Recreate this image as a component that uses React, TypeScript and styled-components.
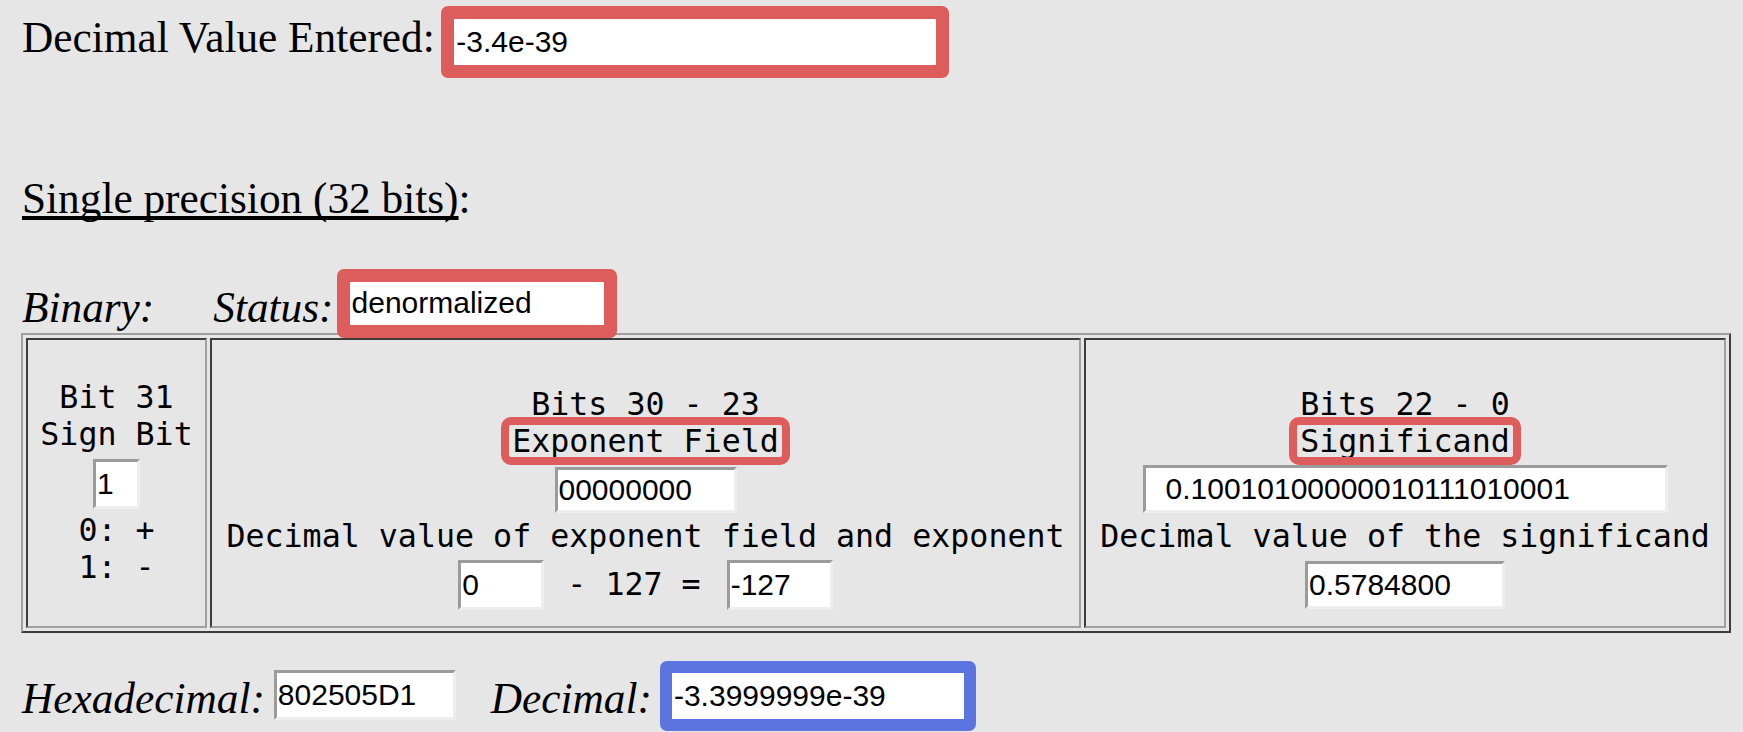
import React from "react";
import styled, { createGlobalStyle } from "styled-components";

const RED = "#dd5c5c";
const BLUE = "#5c74e0";
const LIGHT_EDGE = "#a0a0a0";
const DARK_EDGE = "#3c3c3c";

const GlobalStyle = createGlobalStyle`
  html, body {
    margin: 0;
    padding: 0;
    background: #e6e6e6;
  }
  body {
    width: 1743px;
    height: 732px;
    overflow: hidden;
  }
`;

const Page = styled.div`
  box-sizing: border-box;
  width: 1743px;
  height: 732px;
  padding: 6px 0 0 21px;
  background: #e6e6e6;
  color: #000;
  font-family: "Liberation Serif", "Times New Roman", serif;
  display: flex;
  flex-direction: column;
  align-items: flex-start;
`;

const Row = styled.div<{ $mt?: number }>`
  display: flex;
  align-items: flex-start;
  padding-left: 1px;
  margin-top: ${(p) => p.$mt ?? 0}px;
`;

const Label = styled.span<{ $italic?: boolean; $mt?: number; $mr?: number; $ml?: number }>`
  font-size: 43.3px;
  line-height: 50px;
  font-style: ${(p) => (p.$italic ? "italic" : "normal")};
  margin-top: ${(p) => p.$mt ?? 0}px;
  margin-right: ${(p) => p.$mr ?? 0}px;
  margin-left: ${(p) => p.$ml ?? 0}px;
  white-space: pre;
`;

const Heading = styled.div`
  font-size: 43.3px;
  line-height: 50px;
  margin-top: 95.4px;
  padding-left: 1px;
  white-space: pre;
`;

const Underlined = styled.span`
  text-decoration: underline;
  text-decoration-skip-ink: none;
`;

const Highlight = styled.div<{ $color: string; $bw: number; $mt?: number; $mb?: number }>`
  position: relative;
  z-index: 1;
  display: flex;
  border: ${(p) => p.$bw}px solid ${(p) => p.$color};
  border-radius: 7px;
  margin-top: ${(p) => p.$mt ?? 0}px;
  margin-bottom: ${(p) => p.$mb ?? 0}px;
`;

const Field = styled.input<{ $w: number; $h: number; $pl?: number; $mt?: number; $bare?: boolean }>`
  box-sizing: border-box;
  display: block;
  width: ${(p) => p.$w}px;
  height: ${(p) => p.$h}px;
  margin: ${(p) => p.$mt ?? 0}px 0 0 0;
  padding: 0 0 0 ${(p) => p.$pl ?? 1}px;
  font-family: "Liberation Sans", Arial, sans-serif;
  font-size: 30px;
  color: #000;
  background: #fff;
  border-style: solid;
  border-width: ${(p) => (p.$bare ? 0 : 3)}px;
  border-color: #9b9b9b #eeeeee #eeeeee #9b9b9b;
  border-radius: 0;
  outline: none;
`;

const BitTable = styled.div`
  display: grid;
  grid-template-columns: 181px 871px 642px;
  column-gap: 3px;
  padding: 3px;
  border: 2px solid;
  border-color: ${LIGHT_EDGE} ${DARK_EDGE} ${DARK_EDGE} ${LIGHT_EDGE};
  font-family: "DejaVu Sans Mono", "Liberation Mono", monospace;
  font-size: 31.65px;
  color: #000;
`;

const Cell = styled.div<{ $center?: boolean }>`
  box-sizing: border-box;
  border: 2px solid;
  border-color: ${DARK_EDGE} ${LIGHT_EDGE} ${LIGHT_EDGE} ${DARK_EDGE};
  display: flex;
  flex-direction: column;
  align-items: center;
  justify-content: ${(p) => (p.$center ? "center" : "flex-start")};
  padding: ${(p) => (p.$center ? "0" : "45.6px 0 16px")};
`;

const MonoLine = styled.div<{ $mt?: number }>`
  line-height: 37px;
  white-space: pre;
  margin-top: ${(p) => p.$mt ?? 0}px;
`;

const Tag = styled.span`
  padding: 0 5px;
  outline: 8px solid ${RED};
  outline-offset: -2px;
  border-radius: 4px;
`;

const ExpRow = styled.div`
  display: flex;
  align-items: center;
  margin-top: 5.4px;
`;

const Operator = styled.span`
  line-height: 37px;
  white-space: pre;
  margin: 0 26px 0 23px;
`;

export default function App() {
  return (
    <>
      <GlobalStyle />
      <Page>
        <Row>
          <Label $mt={6.4} $mr={6.5}>Decimal Value Entered:</Label>
          <Highlight $color={RED} $bw={13}>
            <Field $bare $w={482} $h={46} $pl={2} readOnly value="-3.4e-39" />
          </Highlight>
        </Row>

        <Heading>
          <Underlined>Single precision (32 bits)</Underlined>:
        </Heading>

        <Row $mt={45.6}>
          <Label $italic $mt={13.4} $mr={59}>Binary:</Label>
          <Label $italic $mt={13.4} $mr={3}>Status:</Label>
          <Highlight $color={RED} $bw={13} $mb={-5}>
            <Field $bare $w={254} $h={43} $pl={2} readOnly value="denormalized" />
          </Highlight>
        </Row>

        <BitTable>
          <Cell $center>
            <MonoLine>Bit 31</MonoLine>
            <MonoLine>Sign Bit</MonoLine>
            <Field $w={47} $h={50} $mt={5.4} readOnly value="1" />
            <MonoLine $mt={3.6}>0: +</MonoLine>
            <MonoLine>1: -</MonoLine>
          </Cell>
          <Cell>
            <MonoLine>Bits 30 - 23</MonoLine>
            <MonoLine>
              <Tag>Exponent Field</Tag>
            </MonoLine>
            <Field $w={182} $h={46} $mt={7.4} readOnly value="00000000" />
            <MonoLine $mt={4.6}>Decimal value of exponent field and exponent</MonoLine>
            <ExpRow>
              <Field $w={86} $h={50} readOnly value="0" />
              <Operator>- 127 =</Operator>
              <Field $w={106} $h={50} readOnly value="-127" />
            </ExpRow>
          </Cell>
          <Cell>
            <MonoLine>Bits 22 - 0</MonoLine>
            <MonoLine>
              <Tag>Significand</Tag>
            </MonoLine>
            <Field $w={525} $h={48} $mt={5.4} $pl={20} readOnly value="0.10010100000010111010001" />
            <MonoLine $mt={4.6}>Decimal value of the significand</MonoLine>
            <Field $w={200} $h={48} $mt={6.4} readOnly value="0.5784800" />
          </Cell>
        </BitTable>

        <Row $mt={28}>
          <Label $italic $mt={12.4} $mr={9}>Hexadecimal:</Label>
          <Field $w={182} $h={50} $mt={9} readOnly value="802505D1" />
          <Label $italic $mt={12.4} $ml={35} $mr={8}>Decimal:</Label>
          <Highlight $color={BLUE} $bw={12}>
            <Field $bare $w={292} $h={46} $pl={2} readOnly value="-3.3999999e-39" />
          </Highlight>
        </Row>
      </Page>
    </>
  );
}
